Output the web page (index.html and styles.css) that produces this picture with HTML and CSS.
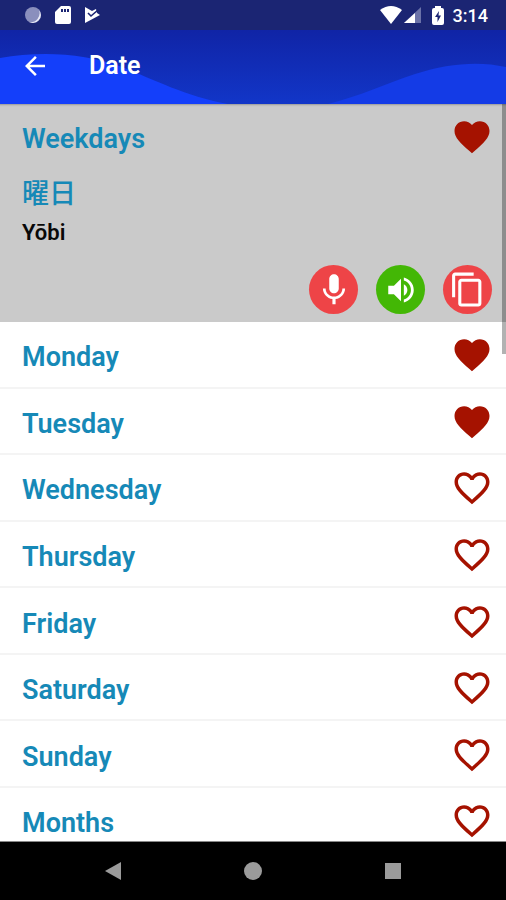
FILE: index.html
```html
<!DOCTYPE html>
<html lang="en">
<head>
<meta charset="utf-8">
<meta name="viewport" content="width=device-width, initial-scale=1">
<title>Date</title>
<link rel="stylesheet" href="styles.css">
</head>
<body>
<svg class="defs" aria-hidden="true">
  <symbol id="heart" viewBox="0 0 24 24"><path d="M12 21.35l-1.45-1.32C5.4 15.36 2 12.28 2 8.5 2 5.42 4.42 3 7.5 3c1.74 0 3.41.81 4.5 2.09C13.09 3.81 14.76 3 16.5 3 19.58 3 22 5.42 22 8.5c0 3.78-3.4 6.86-8.55 11.54L12 21.35z"/></symbol>
  <symbol id="heart-outline" viewBox="0 0 24 24"><path d="M16.5 3c-1.74 0-3.41.81-4.5 2.09C10.91 3.81 9.24 3 7.5 3 4.42 3 2 5.42 2 8.5c0 3.78 3.4 6.86 8.55 11.54L12 21.35l1.45-1.32C18.6 15.36 22 12.28 22 8.5 22 5.42 19.58 3 16.5 3zm-4.4 15.55l-.1.1-.1-.1C7.14 14.24 4 11.39 4 8.5 4 6.5 5.5 5 7.5 5c1.54 0 3.04.99 3.57 2.36h1.87C13.46 5.99 14.96 5 16.5 5c2 0 3.5 1.5 3.5 3.5 0 2.89-3.14 5.74-7.9 10.05z"/></symbol>
</svg>

<div class="status">
  <div class="status-group notices">
    <svg width="18" height="18" viewBox="0 0 18 18"><circle cx="9" cy="9" r="8" fill="#8a8fbd"/><path d="M15 4a8 8 0 0 1-10 12A9 9 0 0 0 15 4z" fill="#e8eaf6"/></svg>
    <svg width="16" height="18" viewBox="0 0 16 18"><path d="M6 0h8q2 0 2 2v14q0 2-2 2H2q-2 0-2-2V6z" fill="#fff"/><path d="M6 3h2v3H6zM9 3h2v3H9zM12 3h2v3h-2z" fill="#1b2573"/></svg>
    <svg width="17" height="18" viewBox="0 0 17 18"><path d="M1 1l7 4 4-2 1 4 3 2L1 17z" fill="#fff"/><path d="M4 7l3 3 7-6" fill="none" stroke="#1b2573" stroke-width="1.6"/></svg>
  </div>
  <div class="status-group">
    <svg width="22" height="18" viewBox="0 0 22 18"><path d="M0 4Q11-4 22 4L11 18z" fill="#fff"/></svg>
    <svg class="signal" width="17" height="16" viewBox="0 0 17 16"><path d="M17 0v16H0z" fill="#6b72a8"/><path d="M11 6v10H0z" fill="#fff"/></svg>
    <svg class="battery" width="12" height="19" viewBox="0 0 12 19"><path d="M3 0h6v2h1q2 0 2 2v13q0 2-2 2H2q-2 0-2-2V4q0-2 2-2h1z" fill="#fff"/><path d="M7 5l-4 6h2.500v5L9 9.500H6.500z" fill="#1b2573"/></svg>
    <time>3:14</time>
  </div>
</div>

<header class="appbar">
  <svg class="waves" viewBox="0 0 506 74" preserveAspectRatio="none" aria-hidden="true">
    <path d="M0 28C40 21 85 23 122 37C155 50 185 66 228 74H0z" fill="#143ffa"/>
    <path d="M328 74C360 66 385 54 415 44C448 33 480 31 506 37V74z" fill="#143be6"/>
  </svg>
  <button class="back" aria-label="Back"><svg width="30" height="30" viewBox="0 0 24 24"><path d="M20 11H7.830l5.590-5.590L12 4l-8 8 8 8 1.410-1.410L7.830 13H20z" fill="#fff"/></svg></button>
  <h1>Date</h1>
</header>

<main class="list">
  <section class="phrase">
    <div class="row-head"><h2 class="term">Weekdays</h2><button class="fav" aria-label="Remove Weekdays from favourites"><svg><use href="#heart"/></svg></button></div>
    <p class="native" lang="ja">曜日</p>
    <p class="reading">Yōbi</p>
    <div class="actions">
      <button class="action" aria-label="Record"><svg width="38" height="38" viewBox="0 0 24 24"><path d="M12 14c1.660 0 3-1.340 3-3V5c0-1.660-1.340-3-3-3S9 3.340 9 5v6c0 1.660 1.340 3 3 3zm5.300-3c0 3-2.540 5.100-5.300 5.100S6.700 14 6.700 11H5c0 3.410 2.720 6.230 6 6.720V21h2v-3.280c3.280-.48 6-3.300 6-6.720z"/></svg></button>
      <button class="action play" aria-label="Listen"><svg width="34" height="34" viewBox="0 0 24 24"><path d="M3 9v6h4l5 5V4L7 9zm13.500 3c0-1.770-1.020-3.290-2.500-4.030v8.050c1.480-.73 2.500-2.250 2.500-4.020zM14 3.230v2.060c2.890.86 5 3.540 5 6.710s-2.110 5.850-5 6.710v2.060c4.010-.91 7-4.490 7-8.770s-2.990-7.860-7-8.770z"/></svg></button>
      <button class="action" aria-label="Copy"><svg width="37" height="37" viewBox="0 0 24 24"><path d="M16 1H4c-1.100 0-2 .9-2 2v14h2V3h12zm3 4H8c-1.100 0-2 .9-2 2v14c0 1.100.9 2 2 2h11c1.100 0 2-.9 2-2V7c0-1.100-.9-2-2-2zm0 16H8V7h11z"/></svg></button>
    </div>
  </section>
  <ul class="rows days">
    <li><span class="term">Monday</span><button class="fav" aria-label="Remove Monday from favourites"><svg><use href="#heart"/></svg></button></li>
    <li><span class="term">Tuesday</span><button class="fav" aria-label="Remove Tuesday from favourites"><svg><use href="#heart"/></svg></button></li>
    <li><span class="term">Wednesday</span><button class="fav" aria-label="Add Wednesday to favourites"><svg><use href="#heart-outline"/></svg></button></li>
    <li><span class="term">Thursday</span><button class="fav" aria-label="Add Thursday to favourites"><svg><use href="#heart-outline"/></svg></button></li>
    <li><span class="term">Friday</span><button class="fav" aria-label="Add Friday to favourites"><svg><use href="#heart-outline"/></svg></button></li>
    <li><span class="term">Saturday</span><button class="fav" aria-label="Add Saturday to favourites"><svg><use href="#heart-outline"/></svg></button></li>
    <li><span class="term">Sunday</span><button class="fav" aria-label="Add Sunday to favourites"><svg><use href="#heart-outline"/></svg></button></li>
  </ul>
  <ul class="rows">
    <li><span class="term">Months</span><button class="fav" aria-label="Add Months to favourites"><svg><use href="#heart-outline"/></svg></button></li>
  </ul>
  <div class="thumb"></div>
</main>

<nav class="navbar" aria-label="System">
  <button aria-label="Back"><svg width="18" height="18" viewBox="0 0 18 18"><path d="M1 9L17 0v18z"/></svg></button>
  <button aria-label="Home"><svg width="18" height="18" viewBox="0 0 18 18"><circle cx="9" cy="9" r="9"/></svg></button>
  <button aria-label="Recent apps"><svg width="18" height="18" viewBox="0 0 18 18"><path d="M1 1h16v16H1z"/></svg></button>
</nav>
</body>
</html>
```

FILE: styles.css
```css
* { box-sizing: border-box; }

body {
  margin: 0;
  height: 100vh;
  display: flex;
  flex-direction: column;
  background: #fff;
  font-family: Roboto, "Noto Sans CJK JP", sans-serif;
  font-weight: 600;
}

h1, h2, p, ul { margin: 0; padding: 0; font-weight: inherit; }
ul { list-style: none; }

button {
  display: flex;
  align-items: center;
  justify-content: center;
  padding: 0;
  border: 0;
  background: none;
  cursor: pointer;
}

svg { display: block; }
.defs { position: absolute; width: 0; height: 0; }

.status {
  flex: none;
  display: flex;
  align-items: center;
  justify-content: space-between;
  height: 30px;
  padding: 0 18px 0 24px;
  background: #1b2573;
  color: #fff;
  font-size: 18px;
  font-weight: 500;
}
.status-group { display: flex; align-items: center; }
.notices { gap: 13px; }
.signal { margin-left: 2px; }
.battery { margin: 0 9px 0 11px; }

.appbar {
  position: relative;
  flex: none;
  display: flex;
  align-items: center;
  gap: 39px;
  height: 74px;
  padding: 0 20px 2px;
  background: linear-gradient(#1024a6, #1236c8);
  color: #fff;
}
.waves { position: absolute; inset: 0; width: 100%; height: 100%; }
.back, .appbar h1 { position: relative; }
.appbar h1 { font-size: 25px; line-height: 30px; }

.list {
  position: relative;
  flex: 1;
  min-height: 0;
  overflow: hidden;
  border-bottom: 1px solid #888;
}

.phrase {
  padding: 11px 14px 8px 22px;
  background: #cacaca;
  box-shadow: inset 0 3px 2px -2px #999;
}
.row-head, .rows li {
  display: flex;
  align-items: center;
  justify-content: space-between;
}
.term { color: #1689b7; font-size: 27px; line-height: 40px; padding-top: 4px; }
.row-head { margin-right: -1px; }

.fav svg { width: 42px; height: 42px; fill: #a51200; }

.native { margin-top: 15px; color: #1689b7; font-size: 27px; font-weight: 500; line-height: 40px; }
.reading { color: #080808; font-size: 22px; line-height: 38px; }

.actions { display: flex; justify-content: flex-end; gap: 18px; margin-top: 13px; }
.action {
  width: 49px;
  height: 49px;
  border-radius: 50%;
  background: #ee4447;
}
.action svg { fill: #fff; }
.play { background: #43b705; }

.days { display: grid; grid-auto-rows: 1fr; height: 466px; }
.rows li {
  min-height: 66px;
  padding: 2px 13px 0 22px;
  border-bottom: 2px solid #f4f4f4;
}

.thumb {
  position: absolute;
  top: 0;
  right: 0;
  width: 4px;
  height: 250px;
  background: rgba(0, 0, 0, 0.3);
}

.navbar {
  flex: none;
  display: flex;
  align-items: center;
  justify-content: center;
  gap: 122px;
  height: 58px;
  background: #000;
}
.navbar svg { fill: #9b9b9b; }
```
